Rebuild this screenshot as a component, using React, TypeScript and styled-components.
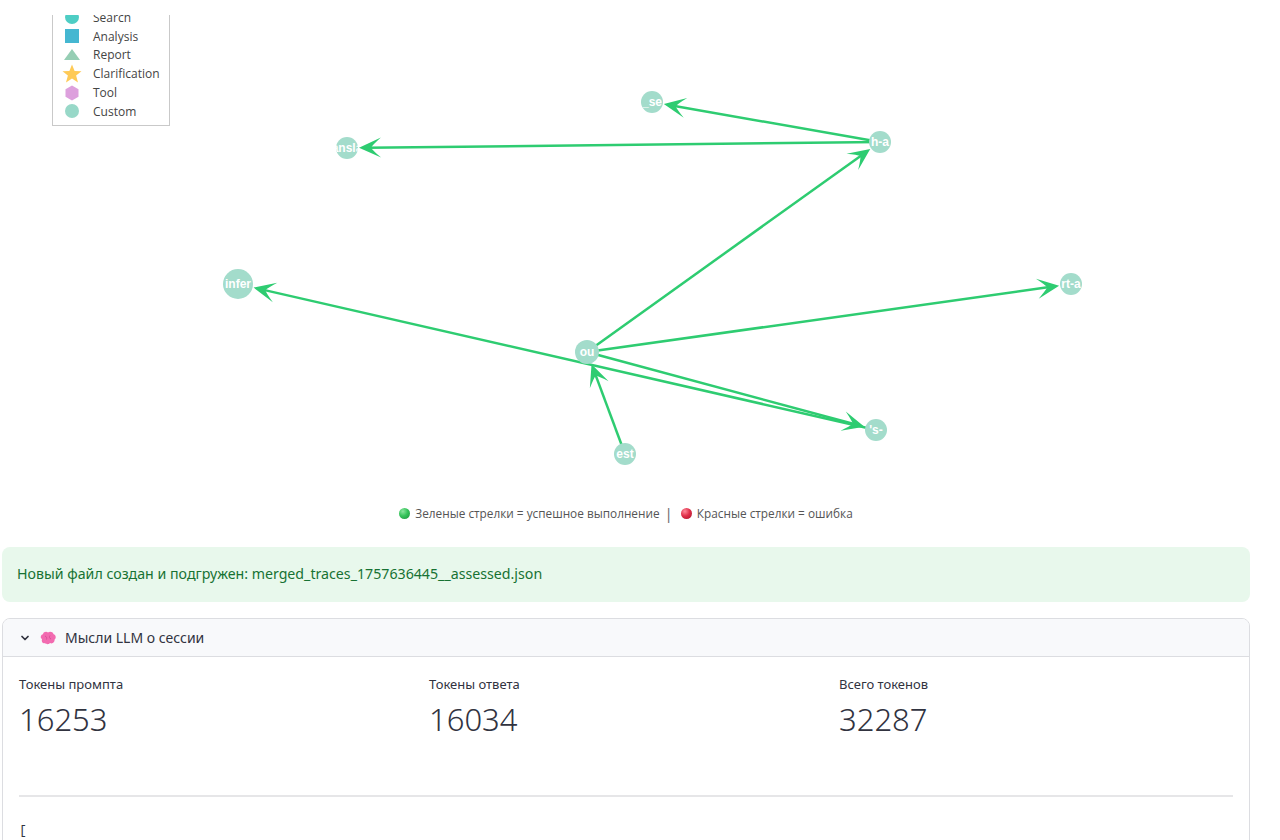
import * as React from "react"
import styled, { createGlobalStyle } from "styled-components"

//style
const GlobalStyle = createGlobalStyle`
  html, body {
    margin: 0;
    padding: 0;
    background: #ffffff;
  }
  body {
    font-family: "Noto Sans", "Open Sans", sans-serif;
    color: #31333f;
  }
`

const Page = styled.div`
  width: 1280px;
  height: 840px;
  overflow: hidden;
  padding: 0 30px 0 2px;
  box-sizing: border-box;
`

const TopCover = styled.div`
  position: fixed;
  top: 0;
  left: 0;
  width: 1280px;
  height: 15px;
  background: #ffffff;
  z-index: 5;
`

const GraphCanvas = styled.div`
  position: relative;
  height: 500px;
`

const GraphSvg = styled.svg`
  display: block;
  width: 1248px;
  height: 500px;
`

const LegendBox = styled.div`
  position: absolute;
  left: 50px;
  top: -3px;
  width: 118px;
  box-sizing: border-box;
  border: 1px solid #c9c9c9;
  background: #ffffff;
  padding: 10px 0 4px 7px;
  font-family: "Open Sans", "Liberation Sans", sans-serif;
  font-size: 12px;
  color: #444444;
`

const LegendRow = styled.div`
  display: flex;
  align-items: center;
  gap: 9px;
  height: 18.8px;
`

const LegendIcon = styled.div`
  width: 24px;
  height: 18px;
  display: flex;
  align-items: center;
  justify-content: center;
`

const ArrowNote = styled.div`
  display: flex;
  align-items: center;
  justify-content: center;
  gap: 5px;
  height: 18px;
  margin-top: 4px;
  font-family: "Open Sans", "Liberation Sans", sans-serif;
  font-size: 11.8px;
  color: #555555;
`

const Ball = styled.span<{ $tone: "green" | "red" }>`
  display: inline-block;
  width: 11px;
  height: 11px;
  border-radius: 50%;
  background: ${(p) =>
    p.$tone === "green"
      ? "radial-gradient(circle at 35% 30%, #8be59e 0%, #35c35a 45%, #1c8f3c 100%)"
      : "radial-gradient(circle at 35% 30%, #ff8a9a 0%, #e0304a 45%, #a80f28 100%)"};
`

const Pipe = styled.span`
  margin: 0 3px 0 0;
  font-size: 15px;
  color: #666666;
`

const SuccessBanner = styled.div`
  margin-top: 25px;
  height: 55px;
  border-radius: 8px;
  background: #e8f8ec;
  color: #177233;
  font-size: 14.2px;
  display: flex;
  align-items: center;
  padding: 0 15px 3px 15px;
  box-sizing: border-box;
`

const Expander = styled.div`
  margin-top: 16px;
  border: 1px solid #dcdde1;
  border-radius: 8px;
  overflow: hidden;
`

const ExpanderHeader = styled.div`
  height: 37px;
  display: flex;
  align-items: center;
  padding: 0 16px;
  gap: 8px;
  background: #f8f9fb;
  border-bottom: 1px solid #dcdde1;
  font-size: 14px;
  color: #31333f;
`

const ExpanderBody = styled.div`
  padding: 17px 16px 0 16px;
  height: 300px;
`

const Metrics = styled.div`
  display: grid;
  grid-template-columns: repeat(3, 1fr);
  gap: 16px;
`

const MetricLabel = styled.div`
  font-size: 13px;
  line-height: 20px;
  color: #31333f;
`

const MetricValue = styled.div`
  font-size: 31px;
  line-height: 46px;
  font-weight: 300;
  color: #31333f;
  margin-top: 2px;
`

const Divider = styled.hr`
  margin: 53px 0 0 0;
  border: none;
  border-top: 2px solid #e6e6e8;
`

const JsonText = styled.div`
  margin-top: 26px;
  font-family: "Liberation Mono", monospace;
  font-size: 13px;
  line-height: 16px;
  color: #31333f;
`

//data
interface INode {
  id: string
  x: number
  y: number
  r: number
  label: string
}

const nodes: INode[] = [
  { id: "se", x: 652, y: 102, r: 11, label: "_se" },
  { id: "tr", x: 347, y: 148, r: 11, label: "ansla" },
  { id: "ha", x: 880, y: 142, r: 11, label: "h-a" },
  { id: "inf", x: 238, y: 284, r: 15, label: "infer" },
  { id: "rt", x: 1071, y: 284, r: 11, label: "rt-a" },
  { id: "ou", x: 587, y: 352, r: 12, label: "ou" },
  { id: "s", x: 876, y: 430, r: 11, label: "'s-" },
  { id: "est", x: 625, y: 454, r: 11, label: "est" },
]

const edges: [string, string][] = [
  ["est", "ou"],
  ["ou", "ha"],
  ["ou", "rt"],
  ["ou", "s"],
  ["s", "inf"],
  ["ha", "se"],
  ["ha", "tr"],
]

const EDGE = "#2ecc71"
const NODE = "#a3dccb"

const byId = (id: string) => nodes.find((n) => n.id === id) as INode

const Edge = ({ from, to }: { from: INode; to: INode }) => {
  const dx = to.x - from.x
  const dy = to.y - from.y
  const len = Math.sqrt(dx * dx + dy * dy)
  const ux = dx / len
  const uy = dy / len
  const tipX = to.x - ux * (to.r + 1)
  const tipY = to.y - uy * (to.r + 1)
  const angle = (Math.atan2(dy, dx) * 180) / Math.PI
  return (
    <g>
      <line
        x1={from.x}
        y1={from.y}
        x2={tipX - ux * 8}
        y2={tipY - uy * 8}
        stroke={EDGE}
        strokeWidth={2.5}
      />
      <path
        d="M0,0 L-22,-10 Q-14,-3 -12,0 Q-14,3 -22,10 Z"
        fill={EDGE}
        transform={`translate(${tipX},${tipY}) rotate(${angle})`}
      />
    </g>
  )
}

const legendItems: { name: string; icon: React.ReactNode }[] = [
  {
    name: "Search",
    icon: (
      <svg width="16" height="16" viewBox="0 0 16 16">
        <circle cx="8" cy="8" r="7" fill="#4ecdc4" />
      </svg>
    ),
  },
  {
    name: "Analysis",
    icon: (
      <svg width="16" height="16" viewBox="0 0 16 16">
        <rect x="1" y="1" width="14" height="14" fill="#45b7d1" />
      </svg>
    ),
  },
  {
    name: "Report",
    icon: (
      <svg width="18" height="14" viewBox="0 0 18 14">
        <polygon points="9,1 17,12 1,12" fill="#96ceb4" />
      </svg>
    ),
  },
  {
    name: "Clarification",
    icon: (
      <svg width="20" height="20" viewBox="0 0 20 20">
        <polygon
          points="10,0.5 12.6,7 19.5,7.3 14.1,11.6 16,18.5 10,14.6 4,18.5 5.9,11.6 0.5,7.3 7.4,7"
          fill="#feca57"
        />
      </svg>
    ),
  },
  {
    name: "Tool",
    icon: (
      <svg width="16" height="16" viewBox="0 0 16 16">
        <polygon points="8,0.5 14.5,4.2 14.5,11.8 8,15.5 1.5,11.8 1.5,4.2" fill="#dda0dd" />
      </svg>
    ),
  },
  {
    name: "Custom",
    icon: (
      <svg width="16" height="16" viewBox="0 0 16 16">
        <circle cx="8" cy="8" r="7" fill="#98d8c8" />
      </svg>
    ),
  },
]

const Graph = () => (
  <GraphCanvas>
    <GraphSvg viewBox="2 0 1248 500">
      <defs>
        {nodes.map((n) => (
          <clipPath id={`clip-${n.id}`} key={n.id}>
            <circle cx={n.x} cy={n.y} r={n.r} />
          </clipPath>
        ))}
      </defs>
      {edges.map(([a, b]) => (
        <Edge key={`${a}-${b}`} from={byId(a)} to={byId(b)} />
      ))}
      {nodes.map((n) => (
        <g key={n.id}>
          <circle cx={n.x} cy={n.y} r={n.r} fill={NODE} />
          <text
            x={n.x}
            y={n.y + 4}
            textAnchor="middle"
            fontFamily="Liberation Sans, Arial, sans-serif"
            fontSize={12}
            fontWeight={700}
            fill="#ffffff"
            clipPath={`url(#clip-${n.id})`}
          >
            {n.label}
          </text>
        </g>
      ))}
    </GraphSvg>
    <LegendBox>
      {legendItems.map((item) => (
        <LegendRow key={item.name}>
          <LegendIcon>{item.icon}</LegendIcon>
          {item.name}
        </LegendRow>
      ))}
    </LegendBox>
  </GraphCanvas>
)

const Chevron = () => (
  <svg width="12" height="12" viewBox="0 0 24 24" fill="none" stroke="#31333f" strokeWidth="3.5" strokeLinecap="round" strokeLinejoin="round">
    <polyline points="6 9 12 15 18 9" />
  </svg>
)

const Brain = () => (
  <svg width="18" height="16" viewBox="0 0 18 16">
    <path
      d="M3 9 C1 8 1.5 4.5 4 4.2 C4.5 1.8 7.5 1.2 9 2.6 C10.5 1.2 14 1.6 14.6 4.3 C17 4.8 17.5 8.5 15.6 9.6 C16 12.5 13 14.2 11 13 C9.8 14.6 7 14.6 6 13 C4 13.8 2 12 3 9 Z"
      fill="#f26bb0"
    />
    <path d="M6 6 C7.5 6.5 8 8 7.5 9.5 M11 5.5 C10 7 10.5 8.5 12 9" stroke="#d04a92" strokeWidth="0.8" fill="none" />
  </svg>
)

const metrics = [
  { label: "Токены промпта", value: "16253" },
  { label: "Токены ответа", value: "16034" },
  { label: "Всего токенов", value: "32287" },
]

const App = () => {
  return (
    <Page>
      <GlobalStyle />
      <TopCover />
      <Graph />
      <ArrowNote>
        <Ball $tone="green" />
        Зеленые стрелки = успешное выполнение
        <Pipe>|</Pipe>
        <Ball $tone="red" />
        Красные стрелки = ошибка
      </ArrowNote>
      <SuccessBanner>
        Новый файл создан и подгружен: merged_traces_1757636445__assessed.json
      </SuccessBanner>
      <Expander>
        <ExpanderHeader>
          <Chevron />
          <Brain />
          Мысли LLM о сессии
        </ExpanderHeader>
        <ExpanderBody>
          <Metrics>
            {metrics.map((m) => (
              <div key={m.label}>
                <MetricLabel>{m.label}</MetricLabel>
                <MetricValue>{m.value}</MetricValue>
              </div>
            ))}
          </Metrics>
          <Divider />
          <JsonText>[</JsonText>
        </ExpanderBody>
      </Expander>
    </Page>
  )
}

export default App
